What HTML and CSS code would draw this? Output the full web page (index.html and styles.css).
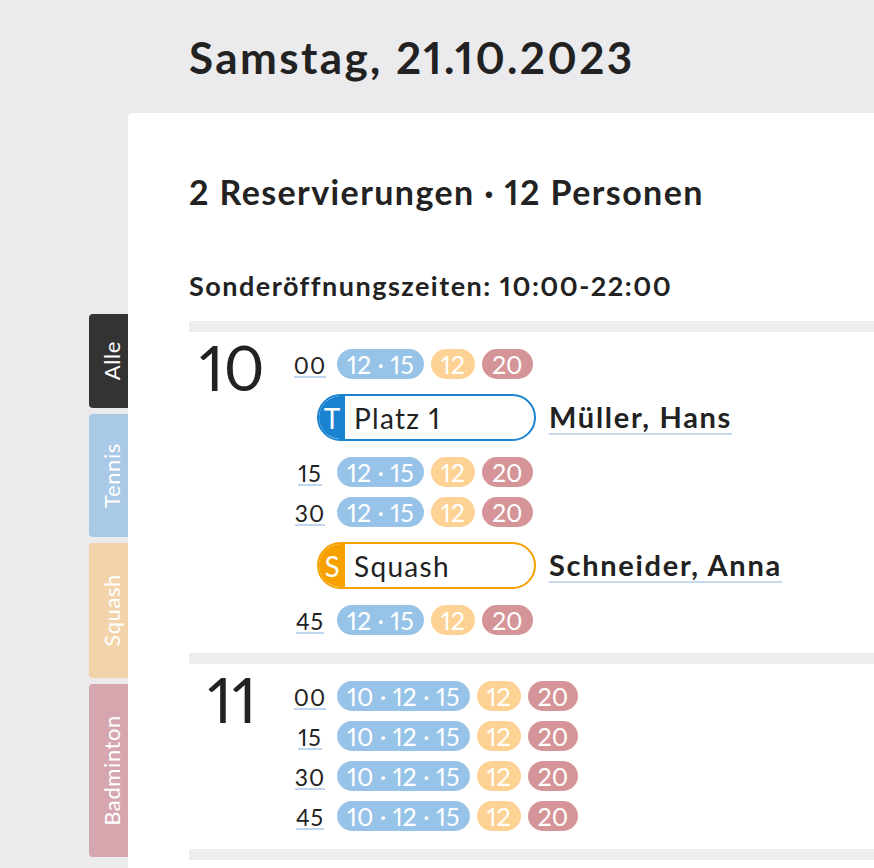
FILE: index.html
```html
<!DOCTYPE html>
<html lang="de">
<head>
<meta charset="utf-8">
<title>Samstag, 21.10.2023</title>
<link rel="stylesheet" href="styles.css">
</head>
<body>
<div class="page">
  <nav class="tabs">
    <div class="tab tab-alle"><span>Alle</span></div>
    <div class="tab tab-tennis"><span>Tennis</span></div>
    <div class="tab tab-squash"><span>Squash</span></div>
    <div class="tab tab-badminton"><span>Badminton</span></div>
  </nav>
  <main class="main">
    <h1 class="title">Samstag, 21.10.2023</h1>
    <section class="card">
      <h2 class="summary">2 Reservierungen · 12 Personen</h2>
      <h3 class="hours">Sonderöffnungszeiten: 10:00-22:00</h3>

      <div class="sep"></div>
      <div class="group">
        <div class="hour">10</div>
        <div class="slots">
          <div class="slot"><span class="min"><span>00</span></span><span class="pill blue">12 · 15</span><span class="pill orange">12</span><span class="pill red">20</span></div>
          <div class="res">
            <div class="box box-tennis"><span class="badge">T</span><span class="label">Platz 1</span></div>
            <span class="name">Müller, Hans</span>
          </div>
          <div class="slot"><span class="min"><span>15</span></span><span class="pill blue">12 · 15</span><span class="pill orange">12</span><span class="pill red">20</span></div>
          <div class="slot"><span class="min"><span>30</span></span><span class="pill blue">12 · 15</span><span class="pill orange">12</span><span class="pill red">20</span></div>
          <div class="res">
            <div class="box box-squash"><span class="badge">S</span><span class="label">Squash</span></div>
            <span class="name">Schneider, Anna</span>
          </div>
          <div class="slot"><span class="min"><span>45</span></span><span class="pill blue">12 · 15</span><span class="pill orange">12</span><span class="pill red">20</span></div>
        </div>
      </div>

      <div class="sep"></div>
      <div class="group">
        <div class="hour">11</div>
        <div class="slots">
          <div class="slot"><span class="min"><span>00</span></span><span class="pill blue">10 · 12 · 15</span><span class="pill orange">12</span><span class="pill red">20</span></div>
          <div class="slot"><span class="min"><span>15</span></span><span class="pill blue">10 · 12 · 15</span><span class="pill orange">12</span><span class="pill red">20</span></div>
          <div class="slot"><span class="min"><span>30</span></span><span class="pill blue">10 · 12 · 15</span><span class="pill orange">12</span><span class="pill red">20</span></div>
          <div class="slot"><span class="min"><span>45</span></span><span class="pill blue">10 · 12 · 15</span><span class="pill orange">12</span><span class="pill red">20</span></div>
        </div>
      </div>
      <div class="sep"></div>
    </section>
  </main>
</div>
</body>
</html>
```

FILE: styles.css
```css
html, body {
  margin: 0;
  padding: 0;
  background: #ebebed;
  font-family: Lato, "Open Sans", sans-serif;
  font-variant-numeric: proportional-nums;
  color: #222;
  overflow: hidden;
}

.page {
  display: flex;
  padding-left: 89px;
  min-height: 868px;
}

.tabs {
  display: flex;
  flex-direction: column;
  gap: 6px;
  padding-top: 314px;
  width: 39px;
}

.tab {
  display: flex;
  align-items: center;
  justify-content: center;
  border-radius: 4px 0 0 4px;
  color: #fff;
  font-size: 22px;
  letter-spacing: 0.6px;
}

.tab span {
  writing-mode: vertical-rl;
  transform: rotate(180deg);
  padding-right: 6px;
}

.tab-alle { background: #333333; height: 94px; }
.tab-tennis { background: #a9c9e7; height: 123px; }
.tab-squash { background: #f3d4aa; height: 135px; }
.tab-badminton { background: #d5a6ae; height: 173px; }

.main {
  flex: 1;
  display: flex;
  flex-direction: column;
}

.title {
  margin: 0;
  padding: 31px 0 0 61px;
  height: 113px;
  box-sizing: border-box;
  font-size: 44px;
  font-weight: 700;
  line-height: 52px;
  letter-spacing: 2.4px;
}

.card {
  flex: 1;
  background: #fff;
  border-top-left-radius: 5px;
  padding-left: 61px;
}

.summary {
  margin: 0;
  padding-top: 59px;
  font-size: 34px;
  font-weight: 700;
  line-height: 40px;
  letter-spacing: 1.4px;
}

.hours {
  margin: 0;
  padding-top: 58px;
  font-size: 27px;
  font-weight: 700;
  line-height: 32px;
  letter-spacing: 1.5px;
}

.sep {
  height: 11px;
  background: #ededed;
}

.hours + .sep { margin-top: 19px; }

.group {
  display: flex;
  padding: 12px 0 13px;
}

.hour {
  width: 86px;
  margin-right: 16px;
  text-align: center;
  font-size: 62px;
  line-height: 46px;
}

.slots {
  display: flex;
  flex-direction: column;
}

.slot {
  display: flex;
  align-items: center;
  height: 40px;
  gap: 7px;
}

.min {
  width: 38px;
  margin-right: 1px;
  display: flex;
  justify-content: center;
  font-size: 23px;
}

.min span {
  border-bottom: 2px solid #bed6ef;
  line-height: 22px;
  padding-top: 3px;
  letter-spacing: 1px;
}

.pill {
  height: 30px;
  line-height: 30px;
  border-radius: 15px;
  padding: 0 10px;
  color: #fff;
  font-size: 25px;
}

.blue { background: #97c3e8; }
.orange { background: #fdd294; }
.red { background: #d59498; }

.res {
  display: flex;
  align-items: center;
  margin: 10px 0 11px 26px;
}

.box {
  width: 219px;
  height: 47px;
  box-sizing: border-box;
  border: 2px solid;
  border-radius: 24px;
  overflow: hidden;
  display: flex;
  align-items: center;
}

.box-tennis { border-color: #1a83d1; }
.box-squash { border-color: #f7a100; }

.badge {
  width: 26px;
  align-self: stretch;
  display: flex;
  align-items: center;
  justify-content: center;
  color: #fff;
  font-size: 28px;
}

.box-tennis .badge { background: #1a83d1; }
.box-squash .badge { background: #f7a100; }

.label {
  padding-left: 9px;
  font-size: 28px;
  letter-spacing: 1.3px;
}

.name {
  margin-left: 13px;
  font-size: 29px;
  font-weight: 700;
  line-height: 32px;
  letter-spacing: 1.7px;
  border-bottom: 2px solid #c4d8ee;
}
```
